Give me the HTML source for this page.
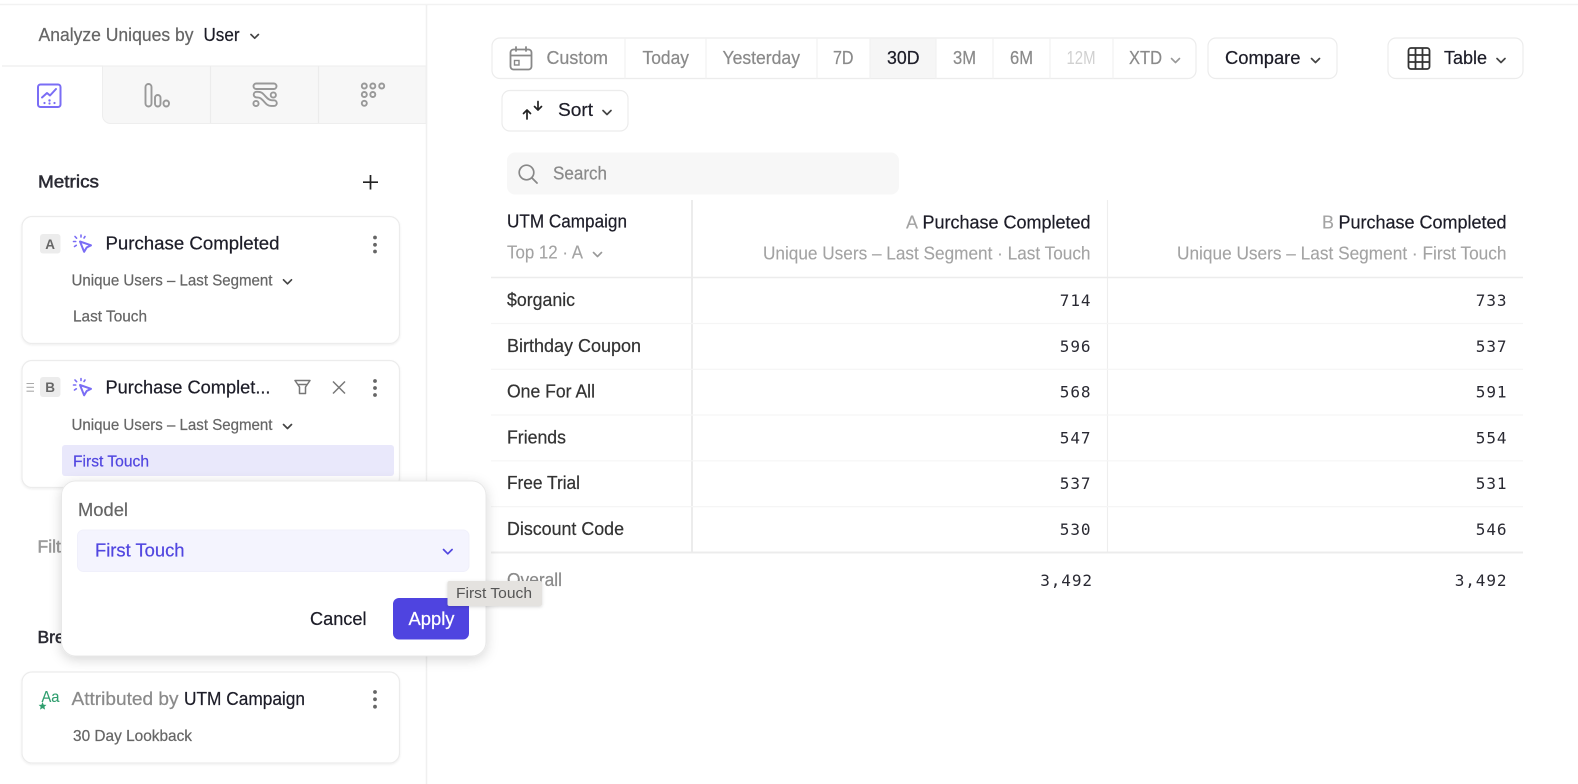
<!DOCTYPE html>
<html><head><meta charset="utf-8"><title>Insights</title>
<style>
html,body{margin:0;padding:0;background:#fff;width:1578px;height:784px;overflow:hidden}
svg{display:block;filter:blur(.3px)}
text{font-family:"Liberation Sans",Arial,sans-serif;font-size:18px;fill:#1d1d28;stroke:#1d1d28;stroke-width:.22;white-space:pre}
.g{fill:#666;stroke:#666}.l{fill:#8a8a8a;stroke:#8a8a8a}.v{fill:#a3a3a3;stroke:#a3a3a3;stroke-width:.12}.p{fill:#5146e0;stroke:#5146e0}
.r{fill:#333;stroke:#333}
.s{font-size:16px}
.h{fill:#2a2a33;stroke:#2a2a33;stroke-width:.5;font-size:17.500px}
.f{fill:#999;stroke:#999;stroke-width:.5;font-size:17.500px}
.bd{font-weight:bold;font-size:13.500px;fill:#666;stroke:none}
.m{font-family:"DejaVu Sans Mono","Liberation Mono",monospace;font-size:16px;fill:#2a2a33;stroke:none;letter-spacing:.9px}
.c{fill:none;stroke:#444;stroke-width:1.7;stroke-linecap:round;stroke-linejoin:round}
.cg{fill:none;stroke:#999;stroke-width:1.6;stroke-linecap:round;stroke-linejoin:round}
.i{fill:none;stroke:#999;stroke-width:1.9;stroke-linecap:round;stroke-linejoin:round}
.ln{stroke:#f1f1f1;stroke-width:1.2}
.ln2{stroke:#ececec;stroke-width:2}
.card{fill:#fff;stroke:#ececec;stroke-width:1.2}
</style></head><body>
<svg width="1578" height="784" viewBox="0 0 1578 784" xmlns="http://www.w3.org/2000/svg">
<defs>
<filter id="sh" x="-10%" y="-10%" width="120%" height="125%"><feDropShadow dx="0" dy="3" stdDeviation="6" flood-color="#000" flood-opacity=".16"/></filter>
<filter id="sc" x="-5%" y="-5%" width="110%" height="115%"><feDropShadow dx="0" dy="1" stdDeviation="1" flood-color="#000" flood-opacity=".07"/></filter>
<filter id="st" x="-10%" y="-20%" width="120%" height="150%"><feDropShadow dx="0" dy="1" stdDeviation="1.5" flood-color="#000" flood-opacity=".16"/></filter>
</defs>

<!-- frame -->
<line x1="0" y1="4.5" x2="1578" y2="4.5" stroke="#f2f2f2" stroke-width="1.5"/>
<line x1="426.5" y1="5" x2="426.5" y2="784" stroke="#f0f0f0" stroke-width="1.5"/>

<!-- analyze -->
<text x="38.5" y="41" class="g" textLength="155" lengthAdjust="spacingAndGlyphs">Analyze Uniques by</text>
<text x="203.5" y="41" textLength="36" lengthAdjust="spacingAndGlyphs">User</text>
<path d="M251 34.5l3.7 3.7 3.7-3.7" class="c"/>

<!-- tabs -->
<line x1="2" y1="66" x2="103" y2="66" stroke="#eee" stroke-width="1.2"/>
<path d="M102.5 66H426V123.5H110.5a8 8 0 0 1-8-8Z" fill="#f7f7f7" stroke="#eee" stroke-width="1"/>
<line x1="210.5" y1="66" x2="210.5" y2="123" stroke="#ececec" stroke-width="1.2"/>
<line x1="318.5" y1="66" x2="318.5" y2="123" stroke="#ececec" stroke-width="1.2"/>
<line x1="426.5" y1="60" x2="426.5" y2="124" stroke="#f0f0f0" stroke-width="1.5"/>
<!-- chart icon -->
<g fill="none" stroke="#7a6df5" stroke-width="2" stroke-linecap="round" stroke-linejoin="round">
<rect x="38" y="84.5" width="22.5" height="22.5" rx="2.5"/>
<path d="M42 97.5l5-4.5 3 2.5 6-6.5"/>
</g>
<g fill="#7a6df5"><circle cx="44.5" cy="103" r="1.100"/><circle cx="49.5" cy="100.500" r="1.200"/><circle cx="49.5" cy="103.500" r="1.100"/><circle cx="54.5" cy="103" r="1.100"/></g>
<!-- bars icon -->
<g class="i">
<rect x="145.5" y="84" width="6" height="22.5" rx="3"/>
<rect x="155" y="95" width="5.5" height="11.5" rx="2.75"/>
<rect x="163.5" y="100.5" width="5.5" height="6" rx="2.75"/>
</g>
<!-- flows icon -->
<g class="i">
<rect x="253.5" y="83.500" width="23" height="5.500" rx="2.750"/>
<circle cx="273.300" cy="95" r="2.600"/>
<circle cx="256" cy="103.500" r="2.600"/>
<path d="M256.500 91.800h1.500c4 0 5 2 7 4 2 2 3.500 4.500 7 4.500h2a2.800 2.800 0 0 1 0 5.600h-3c-4 0-5.500-3-8-5.500-2-2-3-3-6-3h-.5a2.800 2.800 0 0 1 0-5.600Z"/>
</g>
<!-- retention icon -->
<g class="i">
<circle cx="364.300" cy="86" r="2.500"/><circle cx="372.800" cy="86" r="2.500"/><circle cx="381.700" cy="86" r="2.500"/>
<circle cx="364.300" cy="94.500" r="2.500"/><circle cx="372.800" cy="94.500" r="2.500"/>
<circle cx="364.300" cy="103.300" r="2.500"/>
</g>

<!-- metrics -->
<text x="38" y="187.500" class="h" textLength="61" lengthAdjust="spacingAndGlyphs">Metrics</text>
<path d="M370.500 175v14.500M363 182.200h15" stroke="#222" stroke-width="1.700" fill="none"/>

<!-- card A -->
<rect x="22" y="216.500" width="377.500" height="127" rx="10" class="card" filter="url(#sc)"/>
<rect x="40" y="234" width="20.500" height="19.500" rx="3" fill="#ececec"/>
<text x="45.300" y="249" class="bd">A</text>
<g fill="none" stroke="#7a6df5" stroke-width="1.600" stroke-linecap="round" stroke-linejoin="round">
<path d="M80 241.500l11 3.800-4.300 2.200-2.600 4.300Z" stroke-width="2"/>
<path d="M75 236.500l1.600 1.700M81 235v2M85 236.500l-1 1.500M73.500 241.500h2.200M74.500 246.500l1.800-1.200"/>
</g>
<text x="105.500" y="249.500" textLength="174" lengthAdjust="spacingAndGlyphs">Purchase Completed</text>
<g fill="#666"><circle cx="375" cy="237.500" r="1.900"/><circle cx="375" cy="244.800" r="1.900"/><circle cx="375" cy="251.500" r="1.900"/></g>
<text x="71.500" y="285.500" class="g s" textLength="201" lengthAdjust="spacingAndGlyphs">Unique Users – Last Segment</text>
<path d="M283.500 279.800l4 4 4-4" class="c"/>
<text x="73" y="321.500" class="g s" textLength="74" lengthAdjust="spacingAndGlyphs">Last Touch</text>

<!-- card B -->
<rect x="22" y="360.500" width="377.500" height="127" rx="10" class="card" filter="url(#sc)"/>
<path d="M26.500 383.500h7.500M26.500 387.300h7.500M26.500 391.200h7.500" stroke="#aaa" stroke-width="1.100"/>
<rect x="40" y="377" width="20.500" height="20" rx="3" fill="#ececec"/>
<text x="45.300" y="392" class="bd">B</text>
<g fill="none" stroke="#7a6df5" stroke-width="1.600" stroke-linecap="round" stroke-linejoin="round" transform="translate(0 143.500)">
<path d="M80 241.500l11 3.800-4.300 2.200-2.600 4.300Z" stroke-width="2"/>
<path d="M75 236.500l1.600 1.700M81 235v2M85 236.500l-1 1.500M73.500 241.500h2.200M74.500 246.500l1.800-1.200"/>
</g>
<text x="105.500" y="393.300" textLength="165" lengthAdjust="spacingAndGlyphs">Purchase Complet...</text>
<path d="M295 380.500h15l-4.500 6.500v6.500h-6V387ZM297.500 384.500h10" fill="none" stroke="#777" stroke-width="1.500" stroke-linejoin="round"/>
<path d="M333 381.500l12 12M345 381.500l-12 12" stroke="#777" stroke-width="1.500" fill="none"/>
<g fill="#666"><circle cx="375" cy="381" r="1.900"/><circle cx="375" cy="388" r="1.900"/><circle cx="375" cy="395" r="1.900"/></g>
<text x="71.500" y="430" class="g s" textLength="201" lengthAdjust="spacingAndGlyphs">Unique Users – Last Segment</text>
<path d="M283.500 424.500l4 4 4-4" class="c"/>
<rect x="62" y="445" width="332" height="31" rx="3" fill="#e9e8fb"/>
<text x="73" y="466.500" class="p s" textLength="76" lengthAdjust="spacingAndGlyphs">First Touch</text>

<!-- filters / breakdown labels -->
<text x="37.500" y="552.500" class="f">Filters</text>
<text x="37.500" y="643" class="h">Breakdown</text>

<!-- card C -->
<rect x="22" y="672" width="377.500" height="91" rx="10" class="card" filter="url(#sc)"/>
<text x="41.500" y="702" style="font-size:16px;fill:#2f9e6e;stroke:#2f9e6e;stroke-width:.1" textLength="18" lengthAdjust="spacingAndGlyphs">Aa</text>
<path d="M42.500 702l1.200 2.700 2.800.2-2.100 1.900.7 2.800-2.600-1.500-2.500 1.500.7-2.800-2.100-1.900 2.800-.2Z" fill="#2f9e6e"/>
<text x="71.500" y="705" class="l" textLength="107" lengthAdjust="spacingAndGlyphs">Attributed by</text>
<text x="184" y="705" textLength="121" lengthAdjust="spacingAndGlyphs">UTM Campaign</text>
<g fill="#666"><circle cx="375" cy="692" r="1.900"/><circle cx="375" cy="699.300" r="1.900"/><circle cx="375" cy="706.700" r="1.900"/></g>
<text x="73" y="741" class="g s" textLength="119" lengthAdjust="spacingAndGlyphs">30 Day Lookback</text>

<!-- date bar -->
<rect x="492" y="38" width="704" height="40.500" rx="8" fill="#fff" stroke="#ececec" stroke-width="1.200"/>
<rect x="870" y="38.600" width="66" height="39.300" fill="#f6f6f6"/>
<g class="ln"><line x1="625" y1="38" x2="625" y2="78.500"/><line x1="706" y1="38" x2="706" y2="78.500"/><line x1="817" y1="38" x2="817" y2="78.500"/><line x1="870" y1="38" x2="870" y2="78.500"/><line x1="936" y1="38" x2="936" y2="78.500"/><line x1="993" y1="38" x2="993" y2="78.500"/><line x1="1050" y1="38" x2="1050" y2="78.500"/><line x1="1113" y1="38" x2="1113" y2="78.500"/></g>
<g fill="none" stroke="#888" stroke-width="1.800" stroke-linecap="round">
<rect x="510.500" y="49.500" width="21" height="20" rx="3"/>
<path d="M511 55.500h20M516 47v4M526 47v4"/>
<rect x="514.500" y="60.500" width="4.500" height="4.500" stroke-width="1.400"/>
</g>
<text x="546.500" y="64" class="l" textLength="61.500" lengthAdjust="spacingAndGlyphs">Custom</text>
<text x="642.500" y="64" class="l" textLength="46.500" lengthAdjust="spacingAndGlyphs">Today</text>
<text x="722.500" y="64" class="l" textLength="77.500" lengthAdjust="spacingAndGlyphs">Yesterday</text>
<text x="833" y="64" class="l" textLength="20.500" lengthAdjust="spacingAndGlyphs">7D</text>
<text x="887" y="64" textLength="32.500" lengthAdjust="spacingAndGlyphs">30D</text>
<text x="953" y="64" class="l" textLength="23" lengthAdjust="spacingAndGlyphs">3M</text>
<text x="1010" y="64" class="l" textLength="23" lengthAdjust="spacingAndGlyphs">6M</text>
<text x="1066.500" y="64" style="fill:#d0d0d0;stroke:none" textLength="29" lengthAdjust="spacingAndGlyphs">12M</text>
<text x="1129" y="64" class="l" textLength="33" lengthAdjust="spacingAndGlyphs">XTD</text>
<path d="M1171.500 58.500l4 4 4-4" class="cg"/>

<!-- compare -->
<rect x="1208" y="38" width="129" height="40.500" rx="8" fill="#fff" stroke="#ececec" stroke-width="1.200"/>
<text x="1225" y="64" textLength="75.500" lengthAdjust="spacingAndGlyphs">Compare</text>
<path d="M1311.500 58.500l4 4 4-4" class="c"/>

<!-- table btn -->
<rect x="1388" y="38" width="135" height="40.500" rx="8" fill="#fff" stroke="#ececec" stroke-width="1.200"/>
<g fill="none" stroke="#333" stroke-width="1.800">
<rect x="1408.500" y="48" width="21" height="21" rx="2.500"/>
<path d="M1408.500 55h21M1408.500 62h21M1415.500 48v21M1422.500 48v21"/>
</g>
<text x="1444" y="64" textLength="43" lengthAdjust="spacingAndGlyphs">Table</text>
<path d="M1497 58.500l4 4 4-4" class="c"/>

<!-- sort -->
<rect x="502" y="90.500" width="126" height="40.500" rx="8" fill="#fff" stroke="#ececec" stroke-width="1.200"/>
<path d="M527 119v-8.500M523.500 113.500l3.500-3.500 3.500 3.500M538 101.500v8M534.500 106.500l3.500 3.500 3.500-3.500" fill="none" stroke="#222" stroke-width="1.700" stroke-linecap="round" stroke-linejoin="round"/>
<text x="558" y="116" textLength="35" lengthAdjust="spacingAndGlyphs">Sort</text>
<path d="M603 110.500l4 4 4-4" class="c"/>

<!-- search -->
<rect x="507" y="152.500" width="392" height="42" rx="8" fill="#f7f7f7"/>
<circle cx="526.500" cy="172.500" r="7.300" fill="none" stroke="#888" stroke-width="1.700"/>
<path d="M532 178l5 5" stroke="#888" stroke-width="1.800" stroke-linecap="round"/>
<text x="553" y="179.300" class="l" textLength="54" lengthAdjust="spacingAndGlyphs">Search</text>

<!-- table -->
<line x1="692" y1="200" x2="692" y2="552" class="ln2"/>
<line x1="1107.500" y1="200" x2="1107.500" y2="552" stroke="#eee" stroke-width="1.200"/>
<line x1="491" y1="277.500" x2="1523" y2="277.500" class="ln2" style="stroke-width:1.500"/>
<g class="ln" style="stroke:#f5f5f5">
<line x1="491" y1="323.500" x2="1523" y2="323.500"/>
<line x1="491" y1="369.300" x2="1523" y2="369.300"/>
<line x1="491" y1="415" x2="1523" y2="415"/>
<line x1="491" y1="460.800" x2="1523" y2="460.800"/>
<line x1="491" y1="506.600" x2="1523" y2="506.600"/>
</g>
<line x1="491" y1="552.500" x2="1523" y2="552.500" class="ln2"/>

<text x="507" y="227.700" textLength="120" lengthAdjust="spacingAndGlyphs">UTM Campaign</text>
<text x="507" y="258.500" class="v" textLength="76" lengthAdjust="spacingAndGlyphs">Top 12 · A</text>
<path d="M593.500 252.500l4 4 4-4" class="cg"/>
<text x="906" y="228.500" class="v">A</text>
<text x="922.500" y="228.500" textLength="168" lengthAdjust="spacingAndGlyphs">Purchase Completed</text>
<text x="763" y="259.300" class="v" textLength="327.500" lengthAdjust="spacingAndGlyphs">Unique Users – Last Segment · Last Touch</text>
<text x="1322" y="228.500" class="v">B</text>
<text x="1338.500" y="228.500" textLength="168" lengthAdjust="spacingAndGlyphs">Purchase Completed</text>
<text x="1177" y="259.300" class="v" textLength="329.500" lengthAdjust="spacingAndGlyphs">Unique Users – Last Segment · First Touch</text>

<text x="507" y="306" class="r" textLength="68" lengthAdjust="spacingAndGlyphs">$organic</text>
<text x="507" y="351.800" class="r" textLength="134" lengthAdjust="spacingAndGlyphs">Birthday Coupon</text>
<text x="507" y="397.600" class="r" textLength="88" lengthAdjust="spacingAndGlyphs">One For All</text>
<text x="507" y="443.400" class="r" textLength="59" lengthAdjust="spacingAndGlyphs">Friends</text>
<text x="507" y="489.200" class="r" textLength="73" lengthAdjust="spacingAndGlyphs">Free Trial</text>
<text x="507" y="535" class="r" textLength="117" lengthAdjust="spacingAndGlyphs">Discount Code</text>
<text x="507" y="586" class="l" textLength="55" lengthAdjust="spacingAndGlyphs">Overall</text>

<text class="m" x="1091.400" y="306" text-anchor="end">714</text>
<text class="m" x="1091.400" y="351.800" text-anchor="end">596</text>
<text class="m" x="1091.400" y="397.600" text-anchor="end">568</text>
<text class="m" x="1091.400" y="443.400" text-anchor="end">547</text>
<text class="m" x="1091.400" y="489.200" text-anchor="end">537</text>
<text class="m" x="1091.400" y="535" text-anchor="end">530</text>
<text class="m" x="1092.900" y="586" text-anchor="end">3,492</text>
<text class="m" x="1507.400" y="306" text-anchor="end">733</text>
<text class="m" x="1507.400" y="351.800" text-anchor="end">537</text>
<text class="m" x="1507.400" y="397.600" text-anchor="end">591</text>
<text class="m" x="1507.400" y="443.400" text-anchor="end">554</text>
<text class="m" x="1507.400" y="489.200" text-anchor="end">531</text>
<text class="m" x="1507.400" y="535" text-anchor="end">546</text>
<text class="m" x="1507.400" y="586" text-anchor="end">3,492</text>

<!-- popover -->
<rect x="61.500" y="481" width="424.500" height="175" rx="14" fill="#fff" stroke="#e8e8e8" stroke-width="1" filter="url(#sh)"/>
<text x="78" y="516" class="g" textLength="50" lengthAdjust="spacingAndGlyphs">Model</text>
<rect x="77.500" y="530" width="391.500" height="41.500" rx="6" fill="#f4f4fe" stroke="#f0f0fb" stroke-width="1"/>
<text x="95" y="556.700" class="p" textLength="89.500" lengthAdjust="spacingAndGlyphs">First Touch</text>
<path d="M443.500 549.500l4.300 4.300 4.300-4.300" fill="none" stroke="#5146e0" stroke-width="1.700" stroke-linecap="round" stroke-linejoin="round"/>
<text x="310" y="625" textLength="56.500" lengthAdjust="spacingAndGlyphs">Cancel</text>
<rect x="393" y="598" width="76" height="41.500" rx="6" fill="#4f44e0"/>
<text x="408.500" y="625" style="fill:#fff;stroke:#fff" textLength="46" lengthAdjust="spacingAndGlyphs">Apply</text>

<!-- tooltip -->
<rect x="447.500" y="581" width="94.500" height="25" rx="2" fill="#e4e2df" filter="url(#st)"/>
<text x="456" y="598" style="font-size:15px;fill:#555;stroke:none" textLength="76" lengthAdjust="spacingAndGlyphs">First Touch</text>
</svg>
</body></html>
